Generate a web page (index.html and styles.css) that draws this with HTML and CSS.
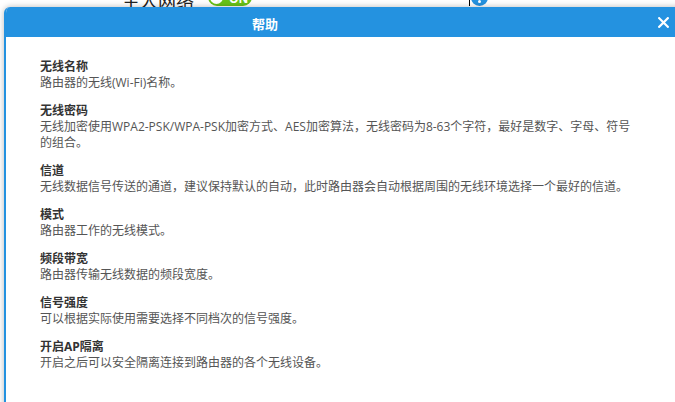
FILE: index.html
```html
<!DOCTYPE html>
<html lang="zh-CN">
<head>
<meta charset="utf-8">
<title>帮助</title>
<link rel="stylesheet" href="styles.css">
</head>
<body>
<div class="page-row">
  <span class="net-label">主人网络</span>
  <span class="toggle"><span class="knob"></span><span class="toggle-text">ON</span></span>
  <span class="cursor"></span>
  <span class="info-dot"><span class="info-i"></span></span>
</div>

<div class="dialog">
  <div class="dialog-head">
    <div class="dialog-title">帮助</div>
    <button class="dialog-close" aria-label="关闭">
      <svg width="11" height="11" viewBox="0 0 11 11"><path d="M1.2 1.2 L9.8 9.8 M9.8 1.2 L1.2 9.8" stroke="#fff" stroke-width="2.2" stroke-linecap="square" fill="none"/></svg>
    </button>
  </div>
  <div class="dialog-body">
    <div class="help-item">
      <div class="help-title">无线名称</div>
      <div class="help-desc">路由器的无线(Wi-Fi)名称。</div>
    </div>
    <div class="help-item">
      <div class="help-title">无线密码</div>
      <div class="help-desc">无线加密使用WPA2-PSK/WPA-PSK加密方式、AES加密算法，无线密码为8-63个字符，最好是数字、字母、符号的组合。</div>
    </div>
    <div class="help-item">
      <div class="help-title">信道</div>
      <div class="help-desc">无线数据信号传送的通道，建议保持默认的自动，此时路由器会自动根据周围的无线环境选择一个最好的信道。</div>
    </div>
    <div class="help-item">
      <div class="help-title">模式</div>
      <div class="help-desc">路由器工作的无线模式。</div>
    </div>
    <div class="help-item">
      <div class="help-title">频段带宽</div>
      <div class="help-desc">路由器传输无线数据的频段宽度。</div>
    </div>
    <div class="help-item">
      <div class="help-title">信号强度</div>
      <div class="help-desc">可以根据实际使用需要选择不同档次的信号强度。</div>
    </div>
    <div class="help-item">
      <div class="help-title">开启AP隔离</div>
      <div class="help-desc">开启之后可以安全隔离连接到路由器的各个无线设备。</div>
    </div>
  </div>
</div>
</body>
</html>
```

FILE: styles.css
```css
html, body {
  margin: 0;
  padding: 0;
  width: 675px;
  height: 402px;
  overflow: hidden;
  background: #fff;
  font-family: "Open Sans", "Noto Sans CJK SC", sans-serif;
}

.page-row {
  display: flex;
  align-items: flex-end;
  height: 6px;
  padding-left: 122px;
}

.net-label {
  font-family: "Noto Sans CJK SC", sans-serif;
  font-size: 18px;
  line-height: 18px;
  color: #222;
  margin-bottom: -3px;
}

.toggle {
  display: flex;
  align-items: center;
  width: 44px;
  height: 18px;
  margin-left: 14px;
  border-radius: 9px;
  background: #68c218;
  box-sizing: border-box;
  padding-left: 2px;
}

.knob {
  width: 13px;
  height: 13px;
  border-radius: 50%;
  background: #fff;
}

.toggle-text {
  color: #fff;
  font-weight: bold;
  font-size: 12px;
  line-height: 12px;
  margin-left: 6px;
  padding-top: 3px;
}

.cursor {
  width: 1px;
  height: 14px;
  background: #000;
  margin-left: 217px;
}

.info-dot {
  display: flex;
  justify-content: center;
  align-items: flex-end;
  width: 17px;
  height: 17px;
  border-radius: 50%;
  background: #2492e0;
  margin-left: 1px;
}

.info-i {
  width: 3px;
  height: 3px;
  background: #fff;
  border-radius: 50%;
  margin-bottom: 3px;
}

.dialog {
  position: absolute;
  left: 4px;
  top: 7px;
  width: 720px;
  height: 430px;
  background: #fff;
  border-left: 2px solid #2492e0;
  border-radius: 6px 6px 0 0;
  box-shadow: 0 0 6px rgba(0, 0, 0, 0.28);
  overflow: hidden;
}

.dialog-head {
  display: flex;
  align-items: center;
  height: 30px;
  background: #2492e0;
  color: #fff;
}

.dialog-title {
  width: 518px;
  text-align: center;
  font-family: "Noto Sans CJK SC", sans-serif;
  font-size: 13px;
  font-weight: bold;
  padding-top: 3px;
}

.dialog-close {
  display: flex;
  align-items: center;
  justify-content: center;
  margin-left: 134px;
  width: 11px;
  height: 11px;
  padding: 0;
  border: 0;
  background: none;
}

.dialog-body {
  padding: 22px 0 0 34px;
  width: 598px;
  font-size: 12px;
  line-height: 16px;
}

.help-item {
  margin-bottom: 12px;
}

.help-title {
  font-weight: bold;
  color: #333;
}

.help-desc {
  color: #555;
}
```
